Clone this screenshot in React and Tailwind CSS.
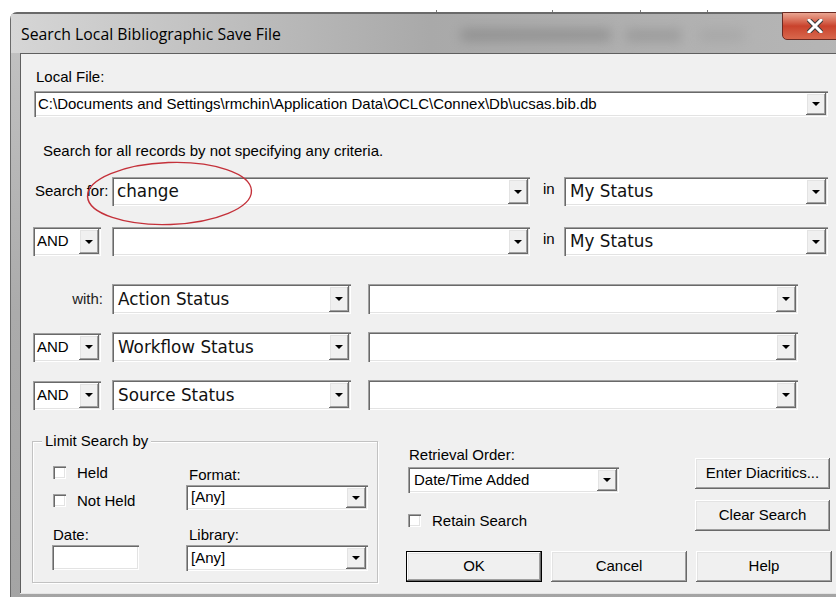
import React from 'react';

// classic 3D edges
const sunken =
  'shadow-[inset_1px_1px_0_#a0a0a0,inset_2px_2px_0_#696969,inset_-1px_-1px_0_#ffffff,inset_-2px_-2px_0_#e3e3e3]';
const raised =
  'shadow-[inset_-1px_-1px_0_#696969,inset_1px_1px_0_#ffffff,inset_-2px_-2px_0_#a0a0a0,inset_2px_2px_0_#e3e3e3]';

const DropBtn = () => (
  <div className={`w-[20px] self-stretch bg-[#f0f0f0] flex items-center justify-center shrink-0 ${raised}`}>
    <div className="w-0 h-0 border-l-[4px] border-r-[4px] border-t-[4px] border-l-transparent border-r-transparent border-t-black" />
  </div>
);

const Combo = ({ className = '', text = '', big = false, pad = 'pl-[3px]' }) => (
  <div className={`bg-white flex items-stretch p-[2px] shrink-0 ${sunken} ${className}`}>
    <div
      className={`flex-1 flex items-center overflow-hidden whitespace-nowrap ${pad} ${
        big ? "font-['DejaVu_Sans',sans-serif] text-[16.8px] text-[#111] pt-[1px]" : 'text-[15px]'
      }`}
    >
      {text}
    </div>
    <DropBtn />
  </div>
);

const Button = ({ children, className = '', isDefault = false }) => (
  <div
    className={`h-[31px] flex items-center justify-center bg-[#f0f0f0] text-[15px] shrink-0 ${
      isDefault ? 'border border-black' : ''
    } ${raised} ${className}`}
  >
    {children}
  </div>
);

const Check = ({ label }) => (
  <div className="flex items-center h-[13px]">
    <div className={`w-[13px] h-[13px] bg-white shrink-0 ${sunken}`} />
    <span className="ml-[11px] leading-[16px] whitespace-nowrap">{label}</span>
  </div>
);

const AndCombo = () => <Combo className="w-[68px] h-[29px] -ml-[1px]" text="AND" pad="pl-[2px]" />;

export default function App() {
  return (
    <div className="w-[836px] h-[597px] overflow-hidden bg-white relative font-['Liberation_Sans',Arial,sans-serif] text-[15px] text-black">
      {/* header ticks of the window behind */}
      <div className="absolute top-[10px] left-[436px] w-px h-[4px] bg-[#777]" />
      <div className="absolute top-[10px] left-[552px] w-px h-[4px] bg-[#777]" />
      <div className="absolute top-[10px] left-[640px] w-px h-[4px] bg-[#777]" />
      <div className="absolute top-[10px] left-[707px] w-px h-[4px] bg-[#777]" />

      {/* dialog frame */}
      <div className="ml-[10px] mt-[12px] w-[840px] h-[600px] rounded-tl-[7px] border-t-2 border-l border-[#6a6a6a] bg-gradient-to-b from-[#c4c4c4] via-[#ababab] to-[#a4a4a4] flex flex-col relative">
        {/* title bar */}
        <div className="h-[39px] flex items-center pl-[10px] pt-[3px] relative overflow-hidden bg-gradient-to-r from-[#d6d6d6] via-[#a9a9a9] to-[#b6b6b6]">
          <span className="relative z-10 font-['Open_Sans',sans-serif] text-[15.8px] text-black">
            Search Local Bibliographic Save File
          </span>
          {/* blurred glass shapes */}
          <div className="absolute left-[450px] top-[15px] w-[150px] h-[12px] bg-[#6a6a6a] blur-[6px] opacity-40" />
          <div className="absolute left-[615px] top-[16px] w-[55px] h-[11px] bg-[#707070] blur-[6px] opacity-35" />
          <div className="absolute left-[688px] top-[16px] w-[45px] h-[11px] bg-[#888] blur-[6px] opacity-25" />
        </div>
        {/* close button */}
        <div className="absolute left-[771px] -top-[2px] w-[70px] h-[28px] rounded-bl-[5px] border border-[#6b2a22] bg-gradient-to-b from-[#e9a592] via-[#c9422c] to-[#d8674c] flex items-center pl-[24px]">
          <svg width="16" height="14" viewBox="0 0 16 14">
            <path d="M2 1 L14 13 M14 1 L2 13" stroke="#3a3a3a" strokeWidth="5" strokeLinecap="square" />
            <path d="M2 1 L14 13 M14 1 L2 13" stroke="#ffffff" strokeWidth="3" strokeLinecap="square" />
          </svg>
        </div>

        {/* client area */}
        <div className="ml-[9px] h-[540px] border-l border-t border-[#5f5f5f] bg-[#f0f0f0] flex flex-col pl-[13px] shadow-[0_1px_0_#e4e4e4]">
          <div className="mt-[15px] ml-[2px] leading-[16px]">Local File:</div>
          <Combo
            className="mt-[6px] w-[794px] h-[26px]"
            text="C:\Documents and Settings\rmchin\Application Data\OCLC\Connex\Db\ucsas.bib.db"
            pad="pl-[2px]"
          />

          <div className="mt-[26px] ml-[9px] leading-[16px]">Search for all records by not specifying any criteria.</div>

          {/* search terms */}
          <div className="mt-[18px] flex items-center h-[29px]">
            <div className="w-[78px] pl-[1px] whitespace-nowrap">Search for:</div>
            <Combo className="w-[418px] h-[29px]" text="change" big pad="pl-[3px]" />
            <div className="w-[34px] pl-[13px] -mt-[4px]">in</div>
            <Combo className="w-[264px] h-[29px]" text="My Status" big pad="pl-[4px]" />
          </div>
          <div className="mt-[21px] flex items-center h-[29px]">
            <div className="w-[78px]">
              <AndCombo />
            </div>
            <Combo className="w-[418px] h-[29px]" />
            <div className="w-[34px] pl-[13px] -mt-[4px]">in</div>
            <Combo className="w-[264px] h-[29px]" text="My Status" big pad="pl-[4px]" />
          </div>

          {/* status filters */}
          <div className="mt-[28px] flex items-center h-[30px]">
            <div className="w-[78px] pr-[9px] text-right text-[#222]">with:</div>
            <Combo className="w-[239px] h-[30px]" text="Action Status" big pad="pl-[4px]" />
            <Combo className="ml-[17px] w-[430px] h-[30px]" />
          </div>
          <div className="mt-[18px] flex items-center h-[30px]">
            <div className="w-[78px]">
              <AndCombo />
            </div>
            <Combo className="w-[239px] h-[30px]" text="Workflow Status" big pad="pl-[4px]" />
            <Combo className="ml-[17px] w-[430px] h-[30px]" />
          </div>
          <div className="mt-[18px] flex items-center h-[30px]">
            <div className="w-[78px]">
              <AndCombo />
            </div>
            <Combo className="w-[239px] h-[30px]" text="Source Status" big pad="pl-[4px]" />
            <Combo className="ml-[17px] w-[430px] h-[30px]" />
          </div>

          {/* bottom section */}
          <div className="mt-[31px] flex">
            <div className="relative -ml-[2px] w-[346px] h-[142px] border border-[#c2c2c2] shadow-[inset_1px_1px_0_#ffffff,1px_1px_0_#ffffff] flex pl-[20px] pt-[24px]">
              <span className="absolute -top-[9px] left-[9px] px-[3px] bg-[#f0f0f0] leading-[16px]">Limit Search by</span>
              <div className="w-[133px] flex flex-col">
                <Check label="Held" />
                <div className="mt-[15px]">
                  <Check label="Not Held" />
                </div>
                <div className="mt-[20px] leading-[16px]">Date:</div>
                <div className={`mt-[2px] -ml-[1px] w-[87px] h-[25px] bg-white ${sunken}`} />
              </div>
              <div className="w-[182px] flex flex-col">
                <div className="mt-[1px] ml-[3px] leading-[16px]">Format:</div>
                <Combo className="mt-[2px] w-[182px] h-[25px]" text="[Any]" pad="pl-[3px]" />
                <div className="mt-[17px] ml-[3px] leading-[16px]">Library:</div>
                <Combo className="mt-[2px] w-[182px] h-[26px]" text="[Any]" pad="pl-[3px]" />
              </div>
            </div>

            <div className="ml-[28px] w-[426px] h-[141px] flex flex-col">
              <div className="flex">
                <div className="w-[214px] flex flex-col">
                  <div className="mt-[6px] ml-[3px] leading-[16px]">Retrieval Order:</div>
                  <Combo className="mt-[4px] ml-[2px] w-[211px] h-[26px]" text="Date/Time Added" pad="pl-[4px]" />
                  <div className="mt-[21px] ml-[2px]">
                    <Check label="Retain Search" />
                  </div>
                </div>
                <div className="ml-[75px] flex flex-col">
                  <Button className="mt-[17px] w-[135px]">Enter Diacritics...</Button>
                  <Button className="mt-[11px] w-[135px]">Clear Search</Button>
                </div>
              </div>
              <div className="mt-auto flex gap-[9px]">
                <Button className="w-[136px]" isDefault>
                  OK
                </Button>
                <Button className="w-[136px]">Cancel</Button>
                <Button className="w-[136px]">Help</Button>
              </div>
            </div>
          </div>
        </div>
      </div>

      {/* red marker ellipse around the search term */}
      <svg className="absolute left-[80px] top-[155px]" width="180" height="80" viewBox="0 0 180 80">
        <ellipse cx="89.5" cy="38.5" rx="82" ry="31" fill="none" stroke="#c4313a" strokeWidth="1.4" transform="rotate(-2 89.5 38.5)" />
      </svg>
    </div>
  );
}
